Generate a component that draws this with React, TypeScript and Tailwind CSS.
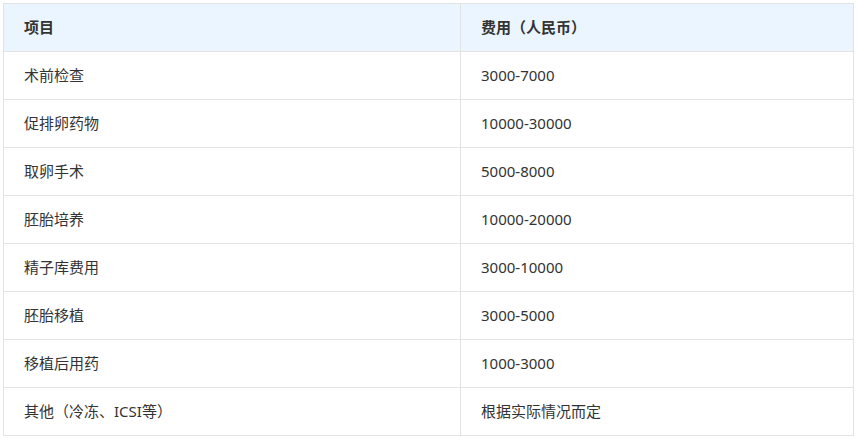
const rows: [string, string][] = [
  ['术前检查', '3000-7000'],
  ['促排卵药物', '10000-30000'],
  ['取卵手术', '5000-8000'],
  ['胚胎培养', '10000-20000'],
  ['精子库费用', '3000-10000'],
  ['胚胎移植', '3000-5000'],
  ['移植后用药', '1000-3000'],
  ['其他（冷冻、ICSI等）', '根据实际情况而定'],
]

export default function App() {
  return (
    <div className="bg-white p-[3px] w-[859px] h-[440px]" style={{ fontFamily: '"Noto Sans", "Noto Sans CJK SC", sans-serif' }}>
      <table className="w-[851px] border-collapse text-[15px] text-[#333]">
        <thead>
          <tr className="bg-[#ebf5ff]">
            <th className="w-[457px] h-[48px] border border-[#e3e3e3] px-5 text-left font-bold">项目</th>
            <th className="h-[48px] border border-[#e3e3e3] px-5 text-left font-bold">费用（人民币）</th>
          </tr>
        </thead>
        <tbody>
          {rows.map(([name, cost]) => (
            <tr key={name}>
              <td className="h-[48px] border border-[#e3e3e3] px-5">{name}</td>
              <td className="h-[48px] border border-[#e3e3e3] px-5">{cost}</td>
            </tr>
          ))}
        </tbody>
      </table>
    </div>
  )
}
